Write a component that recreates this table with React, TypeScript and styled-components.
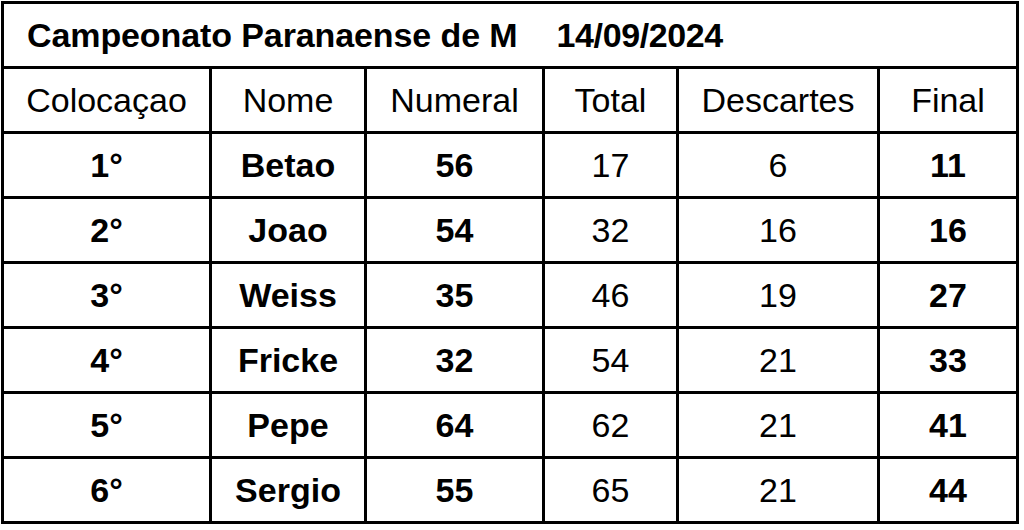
import React from "react";
import styled, { createGlobalStyle } from "styled-components";

const Global = createGlobalStyle`
  html, body { margin: 0; padding: 0; background: #fff; }
  body { font-family: "Liberation Sans", Arial, sans-serif; color: #000; }
`;

const Table = styled.div`
  display: grid;
  grid-template-columns: 205px 152px 175px 131px 198px 136px;
  grid-auto-rows: 62px;
  gap: 3px;
  padding: 3px;
  background: #000;
  width: max-content;
  margin: 1px 0 0 1px;
`;

const TitleCell = styled.div`
  grid-column: 1 / -1;
  background: #fff;
  display: flex;
  align-items: center;
  padding: 1px 0 0 23px;
  font-size: 34px;
  font-weight: 700;
`;

const TitleMain = styled.span`
  letter-spacing: -0.1px;
`;

const DateText = styled.span`
  margin-left: 39px;
  letter-spacing: -0.4px;
`;

const Cell = styled.div<{ $bold?: boolean }>`
  background: #fff;
  display: flex;
  align-items: center;
  justify-content: center;
  padding-top: 1px;
  font-size: 34px;
  font-weight: ${(p) => (p.$bold ? 700 : 400)};
`;

const headers = ["Colocaçao", "Nome", "Numeral", "Total", "Descartes", "Final"];

const rows: [string, string, string, string, string, string][] = [
  ["1°", "Betao", "56", "17", "6", "11"],
  ["2°", "Joao", "54", "32", "16", "16"],
  ["3°", "Weiss", "35", "46", "19", "27"],
  ["4°", "Fricke", "32", "54", "21", "33"],
  ["5°", "Pepe", "64", "62", "21", "41"],
  ["6°", "Sergio", "55", "65", "21", "44"],
];

const boldCols = [true, true, true, false, false, true];

export default function App() {
  return (
    <>
      <Global />
      <Table>
        <TitleCell>
          <TitleMain>Campeonato Paranaense de M</TitleMain>
          <DateText>14/09/2024</DateText>
        </TitleCell>
        {headers.map((h) => (
          <Cell key={h}>{h}</Cell>
        ))}
        {rows.map((r, i) =>
          r.map((v, j) => (
            <Cell key={`${i}-${j}`} $bold={boldCols[j]}>
              {v}
            </Cell>
          ))
        )}
      </Table>
    </>
  );
}
